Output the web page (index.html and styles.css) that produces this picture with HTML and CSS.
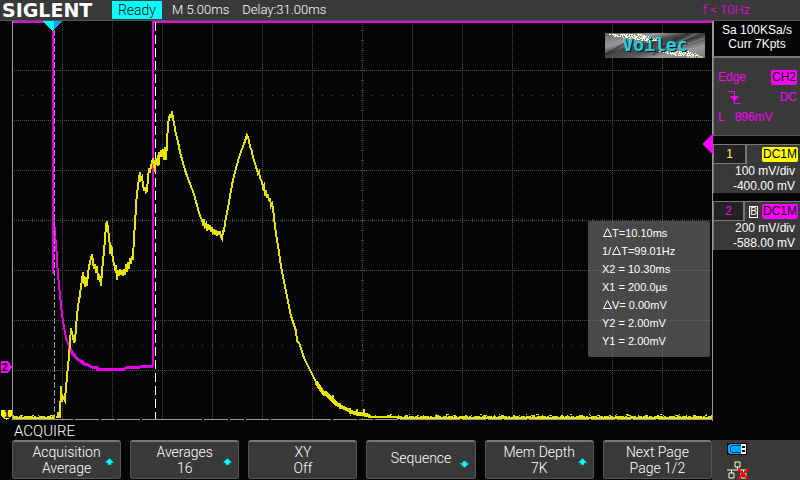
FILE: index.html
```html
<!DOCTYPE html>
<html lang="en">
<head>
<meta charset="utf-8">
<title>SIGLENT</title>
<link rel="stylesheet" href="styles.css">
</head>
<body>
<div class="scope">
  <header class="topbar">
    <strong class="brand">SIGLENT</strong>
    <span class="run-state">Ready</span>
    <span class="timebase">M 5.00ms</span>
    <span class="delay">Delay:31.00ms</span>
    <span class="frequency">f &lt; 10Hz</span>
  </header>

  <main class="display">
    <section class="screen">
      <svg class="plot" viewBox="0 21 713 400" preserveAspectRatio="none">
        <g class="grid">
          <path class="dots" d="M62.5 22V419M112.5 22V419M162.5 22V419M212.5 22V419M262.5 22V419M312.5 22V419M362.5 22V419M412.5 22V419M462.5 22V419M512.5 22V419M562.5 22V419M612.5 22V419M662.5 22V419"/>
          <path class="dots" d="M14 70.5H712M14 120.5H712M14 170.5H712M14 220.5H712M14 270.5H712M14 320.5H712M14 370.5H712"/>
          <path class="sparse" d="M22 95.5H712M22 345.5H712"/>
          <path class="ticks-x" d="M22 220.5H712"/>
          <path class="ticks-y" d="M362.5 30V419"/>
        </g>
        <path class="frame" d="M12.5 21V420M712.5 21V421"/>
        <path class="frame-bottom" d="M13 419.5H712"/>
        <path class="trace ch2" d="M13 22H52.500V274M53 203L53.500 238L54 214L55 238L56 242L57 260L58 275L60 295L62 315L64 327L66 338L69 346"/>
        <path class="trace ch2 thick" d="M69 346L72 353L75 356L77 359L81 361L84 364L88 365L92 367L96 367L98 369L106 369L108 370L124 369L128 367L138 368L140 367L150 366H153"/>
        <path class="trace ch2" d="M152.500 366V22H712"/>
        <path class="cursor-one" d="M54.500 22V419"/>
        <path class="cursor-two" d="M155.500 22V419"/>
        <path class="trace ch1" d="M13 418H54M57 418L58 414L59 417L60 417L61 386L62 402L63 396L64 399L65 401L66 386L67 378L68 365L69 357L70 342L71 328L72 333L73 337L74 343L75 340L76 328L77 315L78 307L79 300L80 295L81 286L82 280L83 272L84 280L85 287L86 277L87 286L88 273L89 267L90 262L91 258L92 254L93 262L94 269L95 264L96 273L97 266L98 280L99 274L100 278L101 286L102 270L103 263L104 250L105 240L106 225L107 221L108 228L109 238L110 245L110.500 254L111 245L112 250L113 261L114 263L115 268L116 265L117 280L118 270L119 276L120 269L121 275L122 272L123 276L124 269L125 275L126 264L127 272L128 262L129 269L130 258L131 264L132 256L133 260L134 236L135 225L136 205L137 194L138 186L139 178L140 172L141 179L142 177L143 184L144 191L145 187L146 192L147 191L148 178L149 168L150 173L151 166L152 162L153 158L154 163L155 172L156 158L157 162L158 155L158.500 166L159 152L160 157L161 150L162 157L163 149L164 156L164.500 160L165 147L166 160L167 142L168 125L169 118L170 114L171 118L172 111L173 118L174 123L175 129L176 134L178 142L180 152L183 163L186 173L190 184L194 194L198 209L200 216L202 220L203 224L204 221L205 226L206 224L207 231L208 224L209 230L210 227L211 232L212 227L213 232L214 229L215 235L216 230L217 236L218 231L219 235L220 231L221 237L222 239L223 231L224 231L225 223L228 208L230 196L233 180L236 168L240 154L244 144L246 138L247 135L248 137L249 141L250 147L252 151L253 158L255 163L258 174L259 172L260 178L262 182L263 187L264 185L265 196L266 190L267 198L268 194L269 201L270 198L271 206L272 204L273 209L275 226L277 240L279 252L281 266L283 276L285 286L287 296L289 306L291 316L294 325L296 331L297 341L299 343L301 348L304 358L308 366L312 374L316 382"/>
        <path class="trace ch1 thick" d="M316 382L320 388L324 394L327 394L332 400L338 405L346 409L354 413L362 414L370 416"/>
        <path class="trace ch1" d="M326 396V391M333 403V395M340 409V403M350 414V408M357 416V409M364 416V409M370 417L396 417L398 418L712 418"/>
        <path class="noise noise-a" d="M13 416.500H54M370 416.500H712"/>
        <path class="noise noise-b" d="M13 415.500H54M350 415.500H712"/>
        <path class="noise noise-c" d="M390 414.500H712"/>
        <path class="position-one" d="M43 21H62L52.500 31Z"/>
        <path class="position-two" d="M54 21H62L54 30Z"/>
        <path class="marker-two" d="M1 361H8L12 367L8 373H1Z"/>
        <path class="marker-one" d="M1 410H12V416L6.500 420L1 416Z"/>
        <path class="marker-two" d="M713 134L702 144L713 154Z"/>
        <text class="marker-label" x="2" y="371">2</text>
        <text class="marker-label" x="4" y="418">1</text>
      </svg>

      <div class="badge">
        <svg class="badge-art" viewBox="0 0 100 25" preserveAspectRatio="none">
          <defs>
            <linearGradient id="steel" x1="0" y1="0" x2="1" y2="1">
              <stop offset="0" stop-color="#666"/><stop offset=".28" stop-color="#999"/><stop offset=".42" stop-color="#444"/><stop offset=".6" stop-color="#555"/><stop offset=".75" stop-color="#999"/><stop offset="1" stop-color="#777"/>
            </linearGradient>
          </defs>
          <path fill="url(#steel)" d="M0 0H100V25H0Z"/>
          <path stroke="#222" stroke-opacity=".5" stroke-width="2" d="M58 14L84 0M48 22L72 4M70 12L100 1M0 22L22 9"/>
          <path stroke="#999" stroke-opacity=".6" d="M62 15L92 0M74 14L100 5M2 14L22 6"/>
          <path class="glint" d="M4 1.500H38M9 3.500H46M24 5.500H51M36 7.500H54M54 18.500H84M62 20.500H91M70 22.500H95M82 24H98"/>
          <path class="glint offset" d="M8 2.500H42M18 4.500H48M30 6.500H52M58 19.500H86M66 21.500H93"/>
        </svg>
        <span class="badge-text">Voilec</span>
      </div>

      <ul class="readout">
        <li><svg class="delta" viewBox="0 0 9 9"><path d="M.5 8.500H8.500L4.500 .5Z"/></svg>T=10.10ms</li>
        <li>1/<svg class="delta" viewBox="0 0 9 9"><path d="M.5 8.500H8.500L4.500 .5Z"/></svg>T=99.01Hz</li>
        <li>X2 = 10.30ms</li>
        <li>X1 = 200.0µs</li>
        <li><svg class="delta" viewBox="0 0 9 9"><path d="M.5 8.500H8.500L4.500 .5Z"/></svg>V= 0.00mV</li>
        <li>Y2 = 2.00mV</li>
        <li>Y1 = 2.00mV</li>
      </ul>
    </section>

    <aside class="sidebar">
      <section class="sampling">
        <div>Sa 100KSa/s</div>
        <div>Curr 7Kpts</div>
      </section>
      <section class="trigger">
        <div class="row"><span>Edge</span><span class="chip pink">CH2</span></div>
        <div class="row">
          <svg class="slope" viewBox="0 0 13 13"><path d="M0 .5H6.500V12.500H13"/><path class="fill" d="M2.500 5.500H10.500L6.500 9.500Z"/></svg>
          <span>DC</span>
        </div>
        <div class="row level"><span>L</span><span>896mV</span></div>
      </section>
      <section class="channel">
        <div class="channel-head"><span class="tab yellow-text">1</span><span class="chip yellow">DC1M</span></div>
        <div class="value">100 mV/div</div>
        <div class="value">-400.00 mV</div>
      </section>
      <section class="channel">
        <div class="channel-head"><span class="tab pink-text">2</span><span class="bandwidth">B</span><span class="chip pink">DC1M</span></div>
        <div class="value">200 mV/div</div>
        <div class="value">-588.00 mV</div>
      </section>
    </aside>
  </main>

  <h1 class="menu-title">ACQUIRE</h1>

  <footer class="bottom">
    <nav class="menu">
      <button class="softkey"><span>Acquisition<br>Average</span><svg class="arrow up" viewBox="0 0 10 7"><path d="M5 0L10 5H7V7H3V5H0Z"/></svg></button>
      <button class="softkey"><span>Averages<br>16</span><svg class="arrow up" viewBox="0 0 10 7"><path d="M5 0L10 5H7V7H3V5H0Z"/></svg></button>
      <button class="softkey"><span>XY<br>Off</span></button>
      <button class="softkey single"><span>Sequence</span><svg class="arrow down" viewBox="0 0 10 7"><path d="M5 7L10 2H7V0H3V2H0Z"/></svg></button>
      <button class="softkey"><span>Mem Depth<br>7K</span><svg class="arrow up" viewBox="0 0 10 7"><path d="M5 0L10 5H7V7H3V5H0Z"/></svg></button>
      <button class="softkey"><span>Next Page<br>Page 1/2</span></button>
    </nav>
    <div class="status">
      <svg class="usb" viewBox="0 0 20 12"><path fill="#000" d="M0 0H20V12H0Z"/><path fill="#0af" d="M3 1H14V11H3L1 9V3Z"/><path fill="none" stroke="#036" d="M14 2.500H5L3.500 4V8L5 9.500H14"/><path fill="#fff" d="M14 1H19V11H14Z"/><path fill="#000" d="M15 3H18V5H15ZM15 7H18V9H15Z"/></svg>
      <svg class="lan" viewBox="0 0 23 19"><path class="wire" d="M8 1H13V6H8ZM10.500 6V9M0 9H20M4.500 9V12M2 12H7V17H2ZM16.500 9V12M14 12H19V17H14Z"/><path class="cross" d="M11 8L21 18M21 8L11 18"/></svg>
    </div>
  </footer>
</div>
</body>
</html>
```
FILE: styles.css
```css
* {
  box-sizing: border-box;
}

body {
  margin: 0;
  background: #050505;
  color: #fff;
  font-family: Roboto, "Liberation Sans", sans-serif;
  font-size: 14px;
  font-weight: 300;
}

.scope {
  display: flex;
  flex-direction: column;
  min-height: 100vh;
}

.topbar {
  display: flex;
  align-items: center;
  height: 21px;
  padding: 0 50px 0 2px;
  background: #393939;
  border-bottom: 1px solid #555;
  font-size: 13px;
  line-height: 18px;
}

.brand {
  width: 110px;
  font: bold 19px/20px "DejaVu Sans", sans-serif;
}

.run-state {
  width: 50px;
  margin-right: 10px;
  background: #00ffff;
  color: #000;
  font-size: 14px;
  text-align: center;
}

.delay {
  margin-left: 13px;
}

.frequency {
  margin-left: auto;
  color: #ff00ff;
}

.display {
  display: grid;
  grid-template-columns: 1fr 87px;
}

.screen {
  position: relative;
}

.plot {
  display: block;
  width: 100%;
  height: 400px;
  fill: none;
  shape-rendering: crispEdges;
}

.dots {
  stroke: #4b4b4b;
  stroke-dasharray: 1 1;
}

.sparse {
  stroke: #4b4b4b;
  stroke-dasharray: 1 9;
}

.ticks-x,
.ticks-y {
  stroke: #4b4b4b;
  stroke-width: 3;
  stroke-dasharray: 1 9;
}

.frame {
  stroke: #999;
}

.frame-bottom {
  stroke: #999;
  stroke-dasharray: 60 2 24 2 14 2 23 2;
}

.ch1 {
  stroke: #e5e500;
  stroke-width: 2;
}

.ch2 {
  stroke: #e500e5;
  stroke-width: 2;
}

.thick {
  stroke-width: 3;
}

.ch1.thick {
  stroke-width: 4;
}

.noise {
  stroke: #e5e500;
}

.noise-a {
  stroke-dasharray: 5 1 3 2 9 1 2 3 6 2 4 1;
}

.noise-b {
  stroke-dasharray: 1 6 3 9 2 4 1 11 4 7;
}

.noise-c {
  stroke-dasharray: 2 17 1 26 1 9 3 31;
}

.cursor-one {
  stroke: #999;
  stroke-dasharray: 6 2;
}

.cursor-two {
  stroke: #fff;
  stroke-dasharray: 9 4;
}

.position-one {
  fill: #00ffff;
}

.position-two {
  fill: #00aaff;
}

.marker-one {
  fill: #ffff00;
}

.marker-two {
  fill: #ff00ff;
}

.marker-label {
  fill: #000;
  font: bold 10px "Liberation Sans", sans-serif;
}

.badge {
  position: absolute;
  top: 12px;
  right: 8px;
  width: 100px;
  height: 25px;
  text-align: center;
}

.badge-art {
  display: block;
  width: 100%;
  height: 100%;
}

.glint {
  stroke: #ffffdf;
  stroke-dasharray: 2 1 4 1 1 2 5 1;
}

.glint.offset {
  stroke-dasharray: 1 1 3 2 1 1;
}

.badge-text {
  position: absolute;
  inset: 0;
  color: #1fd0d5;
  font: bold 18px/24px "DejaVu Sans Mono", monospace;
  text-shadow: 1px 1px #113;
}

.readout {
  position: absolute;
  top: 200px;
  right: 3px;
  width: 122px;
  margin: 0;
  padding: 3px 14px 7px;
  border-radius: 2px;
  background: rgba(110, 110, 110, 0.65);
  font-family: "Liberation Sans", sans-serif;
  font-size: 11px;
  font-weight: 400;
  line-height: 18px;
  list-style: none;
}

.delta {
  width: 9px;
  height: 9px;
  margin-left: 1px;
  fill: none;
  stroke: #fff;
}

.sidebar {
  font-family: "Liberation Sans", sans-serif;
  font-size: 12px;
  font-weight: 400;
  line-height: 14px;
}

.sampling {
  height: 35px;
  padding-top: 2px;
  border-left: 1px solid #999;
  text-align: center;
}

.trigger {
  height: 80px;
  padding: 9px 3px 0 4px;
  background: #393939;
  border-top: 2px solid #777;
  border-bottom: 1px solid #555;
  border-left: 1px solid #777;
  color: #ff00ff;
}

.row {
  display: flex;
  align-items: center;
  justify-content: space-between;
  height: 20px;
}

.row.level {
  justify-content: flex-start;
  gap: 10px;
}

.slope {
  width: 13px;
  height: 13px;
  margin-left: 10px;
  fill: none;
  stroke: #ff00ff;
}

.slope .fill {
  fill: #ff00ff;
}

.chip {
  padding: 0 1px;
  border-radius: 2px;
  color: #000;
  line-height: 15px;
}

.pink {
  background: #ff00ff;
}

.yellow {
  background: #ffff00;
}

.yellow-text {
  color: #ffff55;
}

.pink-text {
  color: #ff00ff;
}

.channel {
  height: 49px;
  margin-top: 8px;
  background: #393939;
  border-top: 1px solid #777;
  border-left: 1px solid #777;
}

.channel-head {
  display: flex;
  align-items: center;
  gap: 4px;
  height: 19px;
  padding-right: 2px;
}

.channel-head .chip {
  margin-left: auto;
}

.tab {
  width: 33px;
  height: 19px;
  border-right: 2px solid #777;
  border-bottom: 1px solid #777;
  background: #222;
  line-height: 18px;
  text-align: center;
}

.bandwidth {
  width: 9px;
  border: 1px solid #fff;
  font-size: 10px;
  line-height: 10px;
  text-align: center;
}

.value {
  padding-right: 5px;
  line-height: 15px;
  text-align: right;
}

.menu-title {
  height: 19px;
  margin: 0;
  padding-left: 14px;
  font-size: 15px;
  font-weight: 300;
  line-height: 20px;
}

.bottom {
  display: grid;
  grid-template-columns: 1fr 88px;
  height: 40px;
}

.menu {
  display: grid;
  grid-template-columns: repeat(6, 1fr);
  gap: 9px;
  padding: 0 0 1px 12px;
}

.softkey {
  position: relative;
  padding: 0;
  border: 1px solid #555;
  border-top: 2px solid #777;
  border-radius: 3px;
  background: #393939;
  color: #fff;
  font: inherit;
  line-height: 16px;
}

.softkey.single {
  padding-bottom: 4px;
}

.arrow {
  position: absolute;
  right: 6px;
  width: 9px;
  height: 7px;
  fill: #00ffff;
}

.arrow.up {
  bottom: 13px;
}

.arrow.down {
  bottom: 10px;
}

.status {
  display: flex;
  flex-direction: column;
  gap: 6px;
  padding: 3px 15px 0;
  background: #393939;
}

.usb {
  width: 20px;
  height: 12px;
}

.lan {
  width: 23px;
  height: 19px;
}

.wire {
  fill: none;
  stroke: #ffffd0;
  stroke-width: 1px;
}

.cross {
  stroke: #ff0000;
  stroke-width: 2px;
}
```
